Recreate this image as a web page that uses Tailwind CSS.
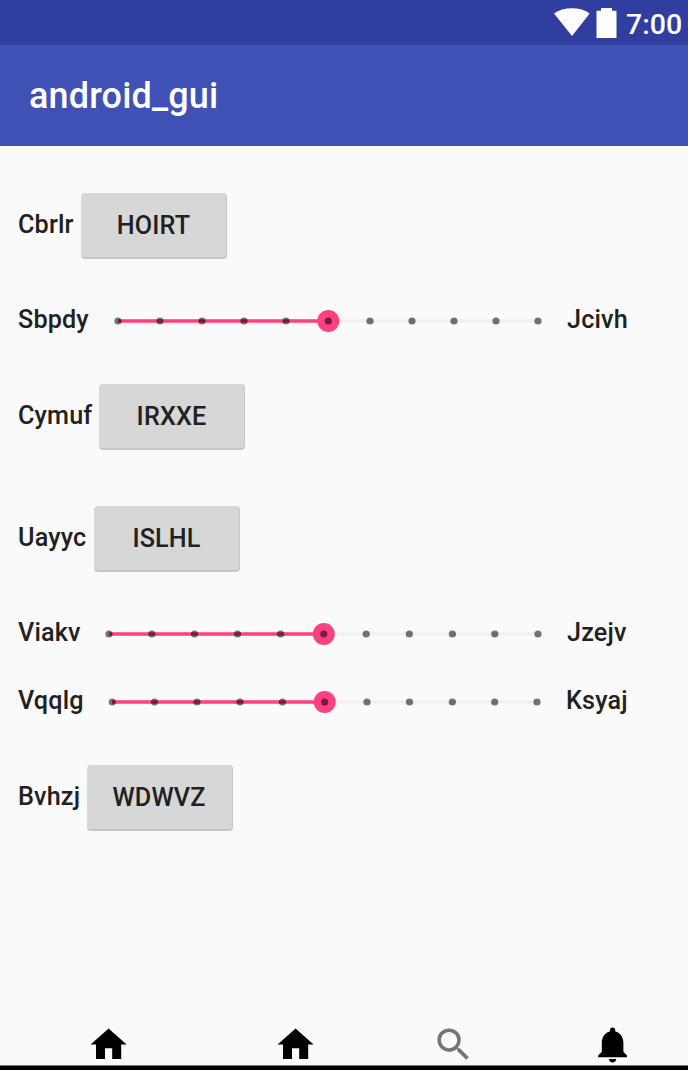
<!DOCTYPE html>
<html lang="en">
<head>
<meta charset="utf-8">
<title>android_gui</title>
<script src="https://cdn.jsdelivr.net/npm/@tailwindcss/browser@4"></script>
</head>
<body class="w-[688px] h-[1070px] overflow-hidden bg-[#fafafa] font-['Roboto',sans-serif] font-medium text-[25.2px] leading-[30px] tracking-[0.15px] text-[#212121] flex flex-col">
<div class="h-[45px] shrink-0 bg-[#303f9f] flex items-start text-white">
  <svg class="ml-[554px] mt-2 shrink-0" width="36" height="28" viewBox="0 0 36 28"><path fill="#fff" d="M0 5.6C5 2 11 .3 18 .3S31 2 35.7 5.6L18 28z"/></svg>
  <svg class="ml-[6px] mt-2 shrink-0" width="21" height="30" viewBox="0 0 21 30"><path fill="#fff" d="M.5 2.8H5V0h11v2.8h4.500V30H.5z"/></svg>
  <span class="ml-[9px] mt-[8px] text-[28.500px] leading-[34px] font-medium tracking-[0px]">7:00</span>
</div>
<header class="h-[101px] shrink-0 bg-[#3f51b5] flex items-center pl-[29px] text-white text-[36px] leading-[42px]"><h1>android_gui</h1></header>
<main class="h-[877px] shrink-0 pt-[47px] pl-[18px] flex flex-col">
  <div class="h-[66px] flex items-center"><span class="w-[63px] pb-[2px]">Cbrlr</span><button class="w-[146px] h-[66px] rounded-[4px] bg-[#d6d8d7] border-b-2 border-r border-[#c5c7c6] pt-px">HOIRT</button></div>
  <div class="h-[44px] mt-[39px] flex items-center"><span class="w-[90px]">Sbpdy</span>
    <svg class="mt-px shrink-0" width="440" height="24" viewBox="0 0 440 24"><path stroke="#f0f0f0" stroke-width="3.600" d="M10 12H430"/><path stroke="#ff4081" stroke-width="3.600" d="M10 12H220"/><circle cx="220.300" cy="12" r="11" fill="#ff4081"/><g fill="#000" fill-opacity=".54"><circle cx="10" cy="12" r="3.600"/><circle cx="52" cy="12" r="3.600"/><circle cx="94" cy="12" r="3.600"/><circle cx="136" cy="12" r="3.600"/><circle cx="178" cy="12" r="3.600"/><circle cx="220.300" cy="12" r="3.600"/><circle cx="262" cy="12" r="3.600"/><circle cx="304" cy="12" r="3.600"/><circle cx="346" cy="12" r="3.600"/><circle cx="388" cy="12" r="3.600"/><circle cx="430" cy="12" r="3.600"/></g></svg>
    <span class="ml-[19px]">Jcivh</span></div>
  <div class="h-[66px] mt-[42px] flex items-center"><span class="w-[81px] pb-[2px]">Cymuf</span><button class="w-[146px] h-[66px] rounded-[4px] bg-[#d6d8d7] border-b-2 border-r border-[#c5c7c6] pt-px">IRXXE</button></div>
  <div class="h-[66px] mt-[56px] flex items-center"><span class="w-[76px] pb-[2px]">Uayyc</span><button class="w-[146px] h-[66px] rounded-[4px] bg-[#d6d8d7] border-b-2 border-r border-[#c5c7c6] pt-px">ISLHL</button></div>
  <div class="h-[44px] mt-[39px] flex items-center"><span class="w-[81px]">Viakv</span>
    <svg class="mt-px shrink-0" width="449" height="24" viewBox="0 0 449 24"><path stroke="#f0f0f0" stroke-width="3.600" d="M10 12H439"/><path stroke="#ff4081" stroke-width="3.600" d="M10 12H224.500"/><circle cx="224.800" cy="12" r="11" fill="#ff4081"/><g fill="#000" fill-opacity=".54"><circle cx="10" cy="12" r="3.600"/><circle cx="52.900" cy="12" r="3.600"/><circle cx="95.500" cy="12" r="3.600"/><circle cx="138.500" cy="12" r="3.600"/><circle cx="181.600" cy="12" r="3.600"/><circle cx="224.800" cy="12" r="3.600"/><circle cx="267.200" cy="12" r="3.600"/><circle cx="310.300" cy="12" r="3.600"/><circle cx="353.400" cy="12" r="3.600"/><circle cx="395.800" cy="12" r="3.600"/><circle cx="439" cy="12" r="3.600"/></g></svg>
    <span class="ml-[19px]">Jzejv</span></div>
  <div class="h-[44px] mt-[24px] flex items-center"><span class="w-[84px]">Vqqlg</span>
    <svg class="mt-[2px] shrink-0" width="445" height="24" viewBox="0 0 445 24"><path stroke="#f0f0f0" stroke-width="3.600" d="M10 12H435"/><path stroke="#ff4081" stroke-width="3.600" d="M10 12H222.500"/><circle cx="222.700" cy="12" r="11" fill="#ff4081"/><g fill="#000" fill-opacity=".54"><circle cx="10.300" cy="12" r="3.600"/><circle cx="52.500" cy="12" r="3.600"/><circle cx="95" cy="12" r="3.600"/><circle cx="138" cy="12" r="3.600"/><circle cx="180.400" cy="12" r="3.600"/><circle cx="222.700" cy="12" r="3.600"/><circle cx="265" cy="12" r="3.600"/><circle cx="307.500" cy="12" r="3.600"/><circle cx="350.400" cy="12" r="3.600"/><circle cx="392.700" cy="12" r="3.600"/><circle cx="435" cy="12" r="3.600"/></g></svg>
    <span class="ml-[19px]">Ksyaj</span></div>
  <div class="h-[66px] mt-[42px] flex items-center"><span class="w-[68.500px] pb-[2px]">Bvhzj</span><button class="w-[146px] h-[66px] rounded-[4px] bg-[#d6d8d7] border-b-2 border-r border-[#c5c7c6] pt-px">WDWVZ</button></div>
</main>
<nav class="h-[42px] shrink-0 flex pl-[86.500px]">
  <svg class="shrink-0" width="43.200" height="43.200" viewBox="0 0 24 24"><path d="M10 20v-6h4v6h5v-8h3L12 3 2 12h3v8z"/></svg>
  <svg class="ml-[144px] shrink-0" width="43.200" height="43.200" viewBox="0 0 24 24"><path d="M10 20v-6h4v6h5v-8h3L12 3 2 12h3v8z"/></svg>
  <svg class="ml-[115.500px] shrink-0" width="43.200" height="43.200" viewBox="0 0 24 24"><path fill="#757575" d="M15.500 14h-.79l-.28-.27A6.471 6.471 0 0 0 16 9.500 6.500 6.500 0 1 0 9.500 16c1.610 0 3.090-.59 4.230-1.570l.27.28v.79l5 4.990L20.490 19l-4.990-5zm-6 0C7.010 14 5 11.990 5 9.500S7.010 5 9.500 5 14 7.010 14 9.500 11.990 14 9.500 14z"/></svg>
  <svg class="ml-[115px] shrink-0" width="43.200" height="43.200" viewBox="0 0 24 24"><path d="M12 22c1.100 0 2-.9 2-2h-4c0 1.100.89 2 2 2zm6-6v-5c0-3.070-1.640-5.640-4.500-6.320V4c0-.83-.67-1.500-1.500-1.500s-1.500.67-1.500 1.500v.68C7.630 5.360 6 7.920 6 11v5l-2 2v1h16v-1l-2-2z"/></svg>
</nav>
<footer class="h-[5px] shrink-0 bg-black border-t border-[#777]"></footer>
</body>
</html>
